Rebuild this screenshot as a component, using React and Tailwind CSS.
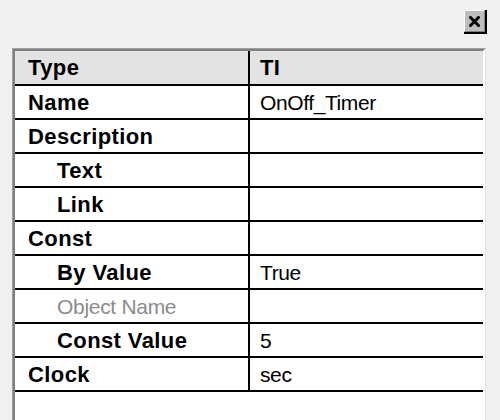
import React from "react";

const rows = [
  { label: "Name", value: "OnOff_Timer" },
  { label: "Description", value: "" },
  { label: "Text", value: "", indent: true },
  { label: "Link", value: "", indent: true },
  { label: "Const", value: "" },
  { label: "By Value", value: "True", indent: true },
  { label: "Object Name", value: "", indent: true, disabled: true },
  { label: "Const Value", value: "5", indent: true },
  { label: "Clock", value: "sec" },
];

const CloseButton = () => (
  <button className="w-[23px] h-[24px] border-r-2 border-b-2 border-black p-0">
    <div className="w-full h-full bg-[#bdbdbd] border-t border-l border-white border-r border-b border-r-[#808080] border-b-[#808080] flex items-center justify-center">
      <svg width="11" height="11" viewBox="0 0 11 11">
        <path d="M1.5 1.5 L9.5 9.5 M9.5 1.5 L1.5 9.5" stroke="#000" strokeWidth="3" strokeLinecap="square" />
      </svg>
    </div>
  </button>
);

export default function App() {
  return (
    <div className="w-[500px] h-[420px] bg-[#f0f0f0] overflow-hidden flex flex-col font-['Liberation_Sans',Arial,sans-serif] text-black">
      <div className="flex justify-end pt-[10px] pr-[13px]">
        <CloseButton />
      </div>

      {/* property grid */}
      <div className="ml-[12px] mt-[14px] w-[474px] flex-1 border-t border-l border-[#a0a0a0] border-r border-r-[#e3e3e3]">
        <div className="h-full border-t-2 border-l-2 border-[#808080] border-r-2 border-r-white bg-white">
          <div className="flex h-[35px] bg-[#e3e3e3] border-b-2 border-black">
            <div className="w-[235px] border-r-2 border-black pl-[13px] text-[22px] font-bold tracking-[0.4px] leading-[34px]">
              Type
            </div>
            <div className="flex-1 pl-[10px] text-[22px] font-bold tracking-[0.4px] leading-[34px]">TI</div>
          </div>
          {rows.map((r) => (
            <div key={r.label} className="flex h-[34px] border-b-2 border-black">
              <div
                className={`w-[235px] border-r-2 border-black leading-[33px] ${
                  r.indent ? "pl-[42px]" : "pl-[13px]"
                } ${
                  r.disabled
                    ? "text-[21px] font-normal tracking-[-0.3px] text-[#8c8c8c]"
                    : "text-[22px] font-bold tracking-[0.4px]"
                }`}
              >
                {r.label}
              </div>
              <div className="flex-1 pl-[10px] text-[21px] tracking-[-0.4px] leading-[33px]">{r.value}</div>
            </div>
          ))}
        </div>
      </div>
    </div>
  );
}
